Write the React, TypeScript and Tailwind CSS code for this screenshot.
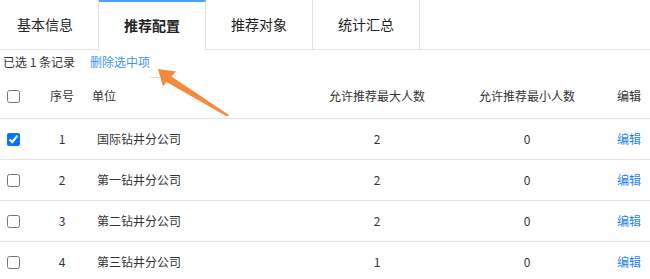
import React from "react";

const rows = [
  { no: 1, name: "国际钻井分公司", max: 2, min: 0, checked: true },
  { no: 2, name: "第一钻井分公司", max: 2, min: 0, checked: false },
  { no: 3, name: "第二钻井分公司", max: 2, min: 0, checked: false },
  { no: 4, name: "第三钻井分公司", max: 1, min: 0, checked: false },
];

const tabs = ["推荐配置", "推荐对象", "统计汇总"];

export default function App() {
  return (
    <div
      className="relative w-[650px] h-[279px] overflow-hidden bg-white text-[#333]"
      style={{ fontFamily: '"Noto Sans CJK SC", "Noto Sans", sans-serif' }}
    >
      {/* Tabs */}
      <div className="flex h-[50px]">
        <div className="w-[99px] h-[50px] flex items-center justify-center pr-[8px] text-[14px] text-[#222] border-r border-b border-[#e4e4e4]">
          基本信息
        </div>
        {tabs.map((t, i) => (
          <div
            key={t}
            className={
              i === 0
                ? "w-[107px] h-[50px] flex items-center justify-center pb-[2px] text-[14px] font-bold text-[#222] border-r border-t-2 border-t-[#4aa3f5] border-[#e4e4e4]"
                : "w-[107px] h-[50px] flex items-center justify-center text-[14px] text-[#222] border-r border-b border-[#e4e4e4]"
            }
          >
            {t}
          </div>
        ))}
        <div className="flex-1 h-[50px] border-b border-[#e4e4e4]" />
      </div>

      {/* Toolbar */}
      <div className="flex items-center h-[24px] pl-[3px] text-[12px]">
        <span className="text-[#333]">已选&nbsp;1&nbsp;条记录</span>
        <span className="ml-[15px] text-[#3d95f0]">删除选中项</span>
      </div>

      {/* Header */}
      <div className="flex items-center h-[45px] border-b border-[#e2e2e2] text-[12px] text-[#333]">
        <div className="w-[40px] pl-[7px] flex items-center">
          <input type="checkbox" className="m-0 w-[13px] h-[13px]" readOnly />
        </div>
        <div className="w-[44px] text-center">序号</div>
        <div className="w-[218px] pl-[8px]">单位</div>
        <div className="w-[150px] text-center">允许推荐最大人数</div>
        <div className="w-[150px] text-center">允许推荐最小人数</div>
        <div className="flex-1 text-right pr-[9px]">编辑</div>
      </div>

      {/* Rows */}
      {rows.map((r) => (
        <div
          key={r.no}
          className="flex items-center h-[41px] border-b border-[#e2e2e2] text-[12px] text-[#333]"
        >
          <div className="w-[40px] pl-[7px] flex items-center">
            <input
              type="checkbox"
              className="m-0 w-[13px] h-[13px]"
              checked={r.checked}
              readOnly
            />
          </div>
          <div className="w-[44px] text-center">{r.no}</div>
          <div className="w-[218px] pl-[13px]">{r.name}</div>
          <div className="w-[150px] text-center">{r.max}</div>
          <div className="w-[150px] text-center">{r.min}</div>
          <div className="flex-1 text-right pr-[9px] text-[#1f87e8]">编辑</div>
        </div>
      ))}

      {/* Annotation arrow */}
      <svg
        className="absolute left-0 top-0 pointer-events-none"
        width="650"
        height="279"
        viewBox="0 0 650 279"
      >
        <line x1="151" y1="77.5" x2="160" y2="77.5" stroke="#dcdcdc" strokeWidth="1" />
        <polygon
          points="158,69 176,71.5 171.5,76.5 229,115 227,116.5 166.5,82 163,86.5"
          fill="#f58a3c"
        />
      </svg>
    </div>
  );
}
